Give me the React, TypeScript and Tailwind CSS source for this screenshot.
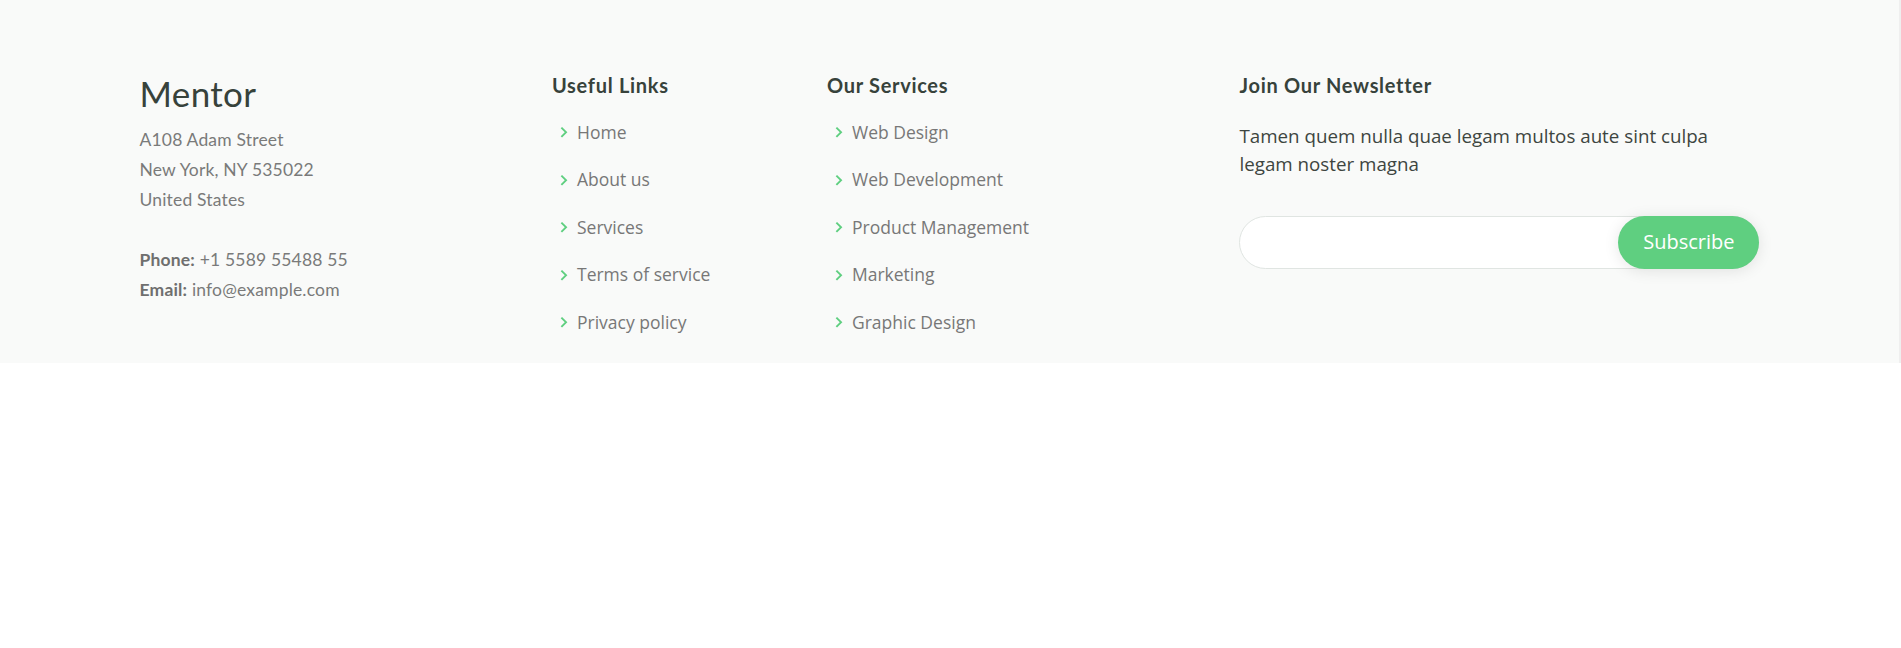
import React from "react";

const Chevron = () => (
  <svg viewBox="0 0 24 24" className="w-[22.5px] h-[22.5px] shrink-0 fill-[#5fcf80]">
    <path d="M10.707 17.707 16.414 12l-5.707-5.707-1.414 1.414L13.586 12l-4.293 4.293z" />
  </svg>
);

const LinkList = ({ items }: { items: string[] }) => (
  <ul className="font-['Open_Sans',sans-serif] text-[17.5px] -mt-[1px]">
    {items.map((t, i) => (
      <li key={t} className={`flex items-center pb-[12.5px] ${i === 0 ? "pt-0" : "pt-[12.5px]"}`}>
        <Chevron />
        <a className="pl-[2.5px] leading-none text-[#777777]">{t}</a>
      </li>
    ))}
  </ul>
);

const Heading = ({ children }: { children: React.ReactNode }) => (
  <h4 className="font-['Lato',sans-serif] text-[20px] font-bold leading-[24px] tracking-[0.035em] text-[#37423b] pb-[15px] mb-[10px]">
    {children}
  </h4>
);

export default function App() {
  return (
    <div className="min-h-[648px] bg-white">
      <div className="flex">
        <footer className="flex-1 bg-[#f9faf9] pt-[73px] pb-[17px]">
          <div className="mx-auto w-[1650px] px-[15px]">
            <div className="-mx-[15px] flex">
              <div className="w-1/4 px-[15px]">
                <h3 className="font-['Lato',sans-serif] text-[35px] leading-none py-[2.5px] mb-[11.5px] text-[#37423b] font-normal tracking-[0.01em]">
                  Mentor
                </h3>
                <p className="font-['Lato',sans-serif] text-[17.5px] leading-[30px] text-[#7a7a7a] tracking-[0.01em]">
                  A108 Adam Street
                  <br />
                  New York, NY 535022
                  <br />
                  United States
                  <br />
                  <br />
                  <strong className="font-bold text-[#6f6f6f]">Phone:</strong> +1 5589 55488 55
                  <br />
                  <strong className="font-bold text-[#6f6f6f]">Email:</strong> info@example.com
                </p>
              </div>
              <div className="w-1/6 px-[15px]">
                <Heading>Useful Links</Heading>
                <LinkList items={["Home", "About us", "Services", "Terms of service", "Privacy policy"]} />
              </div>
              <div className="w-1/4 px-[15px]">
                <Heading>Our Services</Heading>
                <LinkList
                  items={["Web Design", "Web Development", "Product Management", "Marketing", "Graphic Design"]}
                />
              </div>
              <div className="w-1/3 px-[15px]">
                <Heading>Join Our Newsletter</Heading>
                <p className="font-['Open_Sans',sans-serif] text-[18.75px] leading-[28px] text-[#3d4540]">
                  Tamen quem nulla quae legam multos aute sint culpa legam noster magna
                </p>
                <form className="relative mt-[37.5px] h-[53px] rounded-full border border-[#e0e5e2] bg-white px-[12.5px]">
                  <input
                    type="email"
                    className="h-full w-[calc(100%-125px)] bg-transparent px-[10px] outline-none font-['Open_Sans',sans-serif] text-[17.5px]"
                  />
                  <button
                    type="button"
                    className="absolute -top-px -right-px -bottom-px rounded-full bg-[#5fcf80] px-[25px] font-['Open_Sans',sans-serif] text-[20px] text-white shadow-[0_2px_15px_rgba(0,0,0,0.1)]"
                  >
                    Subscribe
                  </button>
                </form>
              </div>
            </div>
          </div>
        </footer>
        <div className="w-[2px] bg-[#efefef]" />
      </div>
    </div>
  );
}
